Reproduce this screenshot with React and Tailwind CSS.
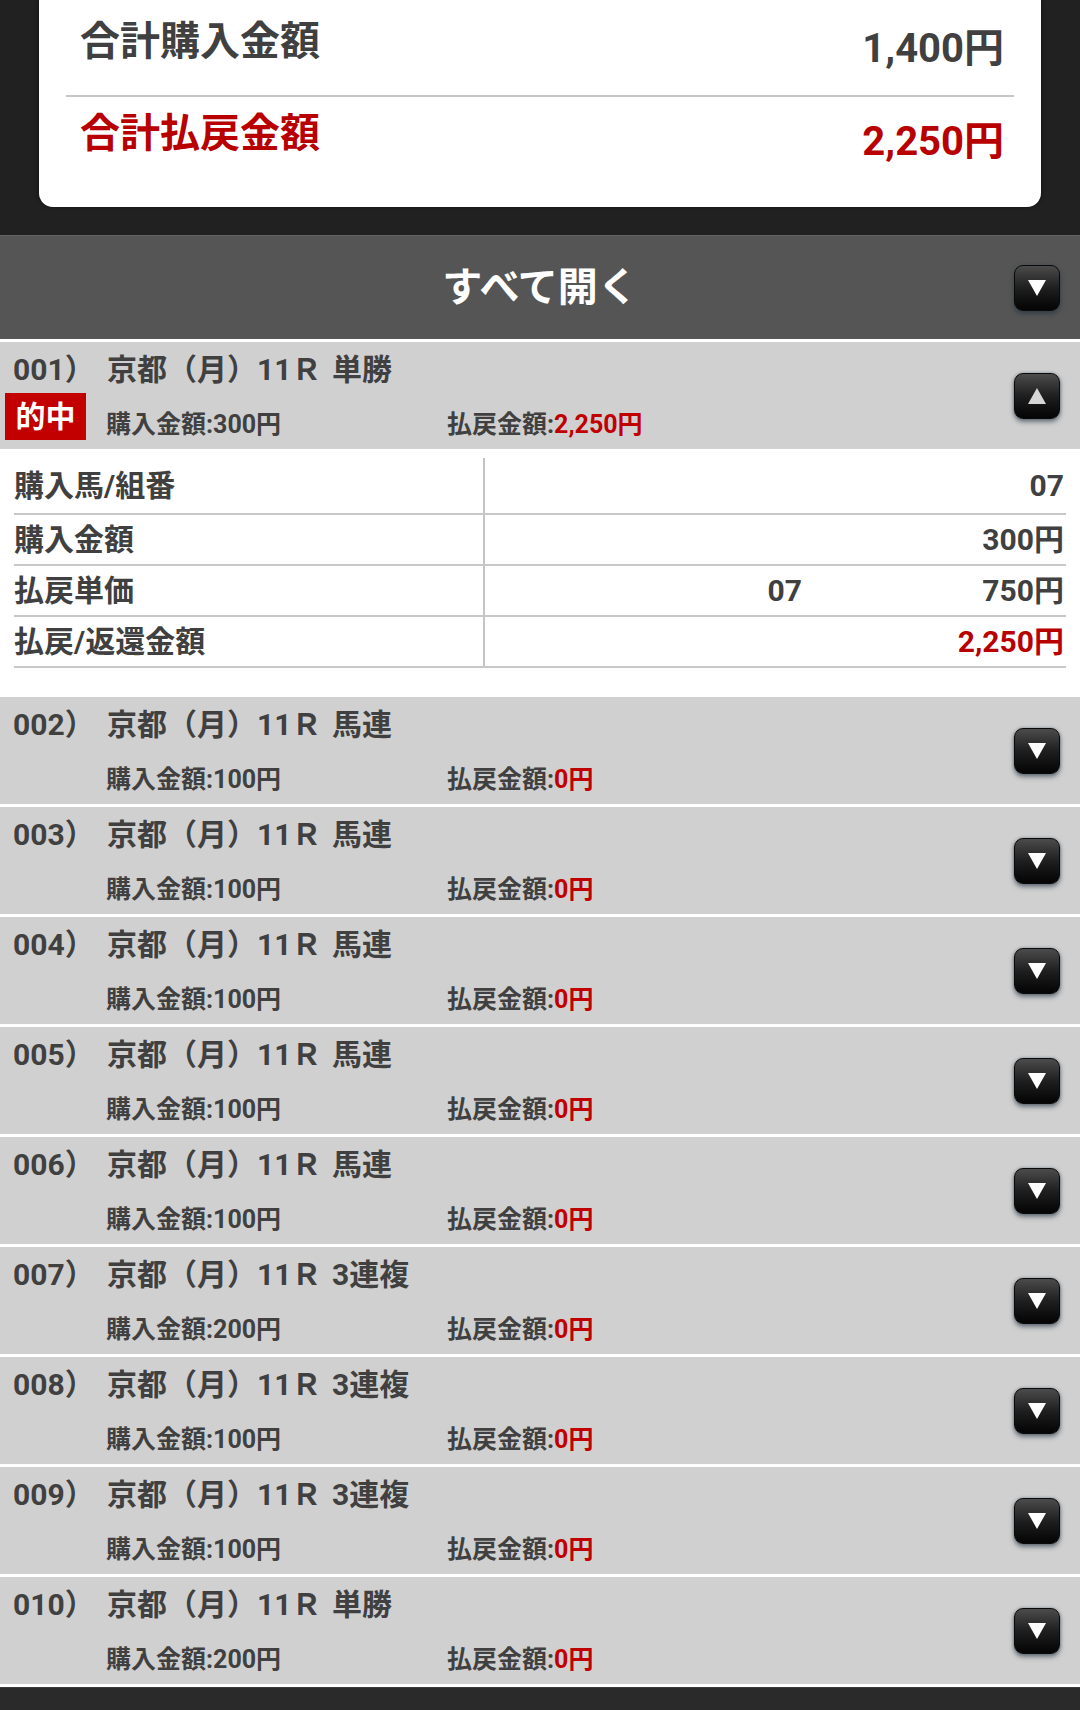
import React from 'react';

const bets = [
  { no: '002', race: '京都（月）11Ｒ', type: '馬連', buy: '100円' },
  { no: '003', race: '京都（月）11Ｒ', type: '馬連', buy: '100円' },
  { no: '004', race: '京都（月）11Ｒ', type: '馬連', buy: '100円' },
  { no: '005', race: '京都（月）11Ｒ', type: '馬連', buy: '100円' },
  { no: '006', race: '京都（月）11Ｒ', type: '馬連', buy: '100円' },
  { no: '007', race: '京都（月）11Ｒ', type: '3連複', buy: '200円' },
  { no: '008', race: '京都（月）11Ｒ', type: '3連複', buy: '100円' },
  { no: '009', race: '京都（月）11Ｒ', type: '3連複', buy: '100円' },
  { no: '010', race: '京都（月）11Ｒ', type: '単勝', buy: '200円' },
];

const ToggleButton = ({ up }) => (
  <div className="w-[46px] h-[46px] rounded-[9px] border border-[#0a0a0a] bg-linear-to-b from-[#4c4c4c] via-[#1f1f1f] to-[#050505] shadow-[0_3px_5px_rgba(30,45,60,0.55),0_0_3px_rgba(60,80,100,0.5)] flex items-center justify-center">
    <svg width="20" height="18" viewBox="0 0 20 18">
      <path d={up ? 'M10 1L19 17H1Z' : 'M1 1H19L10 17Z'} fill={up ? '#d6d6d6' : '#ffffff'} />
    </svg>
  </div>
);

const BetHeader = ({ no, race, type, buy, pay, hit, open }) => (
  <div className="h-[107px] bg-[#d0d0d0] flex items-center">
    <div className="flex-1 self-stretch flex flex-col">
      <div className="mt-[14px] h-[28px] flex items-center pl-[13px] text-[30px] leading-none text-[#404040] font-bold whitespace-nowrap">
        <span className="w-[94px]">{no}）</span>
        <span className="w-[225px]">{race}</span>
        <span>{type}</span>
      </div>
      <div className="mt-[9px] h-[47px] flex items-start text-[25px] leading-[25px] font-bold text-[#404040] whitespace-nowrap">
        <div className="w-[106px] pl-[5px]">
          {hit && (
            <div className="w-[81px] h-[47px] bg-[#c20000] text-white text-[30px] leading-none flex items-center justify-center">
              的中
            </div>
          )}
        </div>
        <span className="w-[341px] mt-[19px]">購入金額:{buy}</span>
        <span className="mt-[19px]">
          払戻金額:<span className="text-[#c00000]">{pay}</span>
        </span>
      </div>
    </div>
    <div className="pr-[20px]">
      <ToggleButton up={open} />
    </div>
  </div>
);

const DetailRow = ({ label, children, first }) => (
  <div className={`flex border-b-2 border-[#c8c8c8] ${first ? 'h-[57px]' : 'h-[51px]'}`}>
    <div className="w-[471px] border-r-2 border-[#c4c4c4] flex items-center text-[30px] font-bold text-[#404040]">
      {label}
    </div>
    <div className="flex-1 flex items-center justify-end pr-[2px] text-[30px] font-bold text-[#404040]">
      {children}
    </div>
  </div>
);

export default function App() {
  return (
    <div className="w-[1080px] h-[1710px] overflow-hidden bg-white font-['Roboto','Noto_Sans_CJK_JP',sans-serif]">
      {/* totals card */}
      <div className="bg-[#212121] pb-[28px]">
        <div className="mx-[39px] h-[207px] bg-white rounded-b-[14px] px-[27px] shadow-[0_0_4px_rgba(0,0,0,0.5)]">
          <div className="h-[95px] flex justify-between items-start pl-[14px] pr-[10px] font-bold text-[#404040]">
            <span className="mt-[22px] text-[40px] leading-none">合計購入金額</span>
            <span className="mt-[29px] text-[40px] leading-none">1,400円</span>
          </div>
          <div className="h-[2px] bg-[#c6c6c6]"></div>
          <div className="flex justify-between items-start pl-[14px] pr-[10px] font-bold text-[#b80000]">
            <span className="mt-[17px] text-[40px] leading-none">合計払戻金額</span>
            <span className="mt-[25px] text-[40px] leading-none">2,250円</span>
          </div>
        </div>
      </div>

      {/* open all bar */}
      <div className="h-[104px] bg-[#555555] border-t border-[#626262] grid grid-cols-[1fr_auto_1fr] items-center">
        <div></div>
        <div className="text-white text-[40px] font-bold leading-none">すべて開く</div>
        <div className="flex justify-end pr-[20px]">
          <ToggleButton />
        </div>
      </div>

      <div className="h-[3px] bg-white"></div>

      {/* first bet, opened */}
      <BetHeader no="001" race="京都（月）11Ｒ" type="単勝" buy="300円" pay="2,250円" hit open />
      <div className="bg-white pt-[9px] pb-[29px] px-[14px]">
        <DetailRow label="購入馬/組番" first>07</DetailRow>
        <DetailRow label="購入金額">300円</DetailRow>
        <DetailRow label="払戻単価">
          <span>07</span>
          <span className="w-[262px] text-right">750円</span>
        </DetailRow>
        <DetailRow label="払戻/返還金額">
          <span className="text-[#b80000]">2,250円</span>
        </DetailRow>
      </div>

      {/* remaining bets */}
      <div className="flex flex-col gap-[3px] bg-white pb-[3px]">
        {bets.map((b) => (
          <BetHeader key={b.no} {...b} pay="0円" />
        ))}
      </div>
      <div className="h-[23px] bg-[#2a2a2a] border-t border-[#3a3a3a]"></div>
    </div>
  );
}
